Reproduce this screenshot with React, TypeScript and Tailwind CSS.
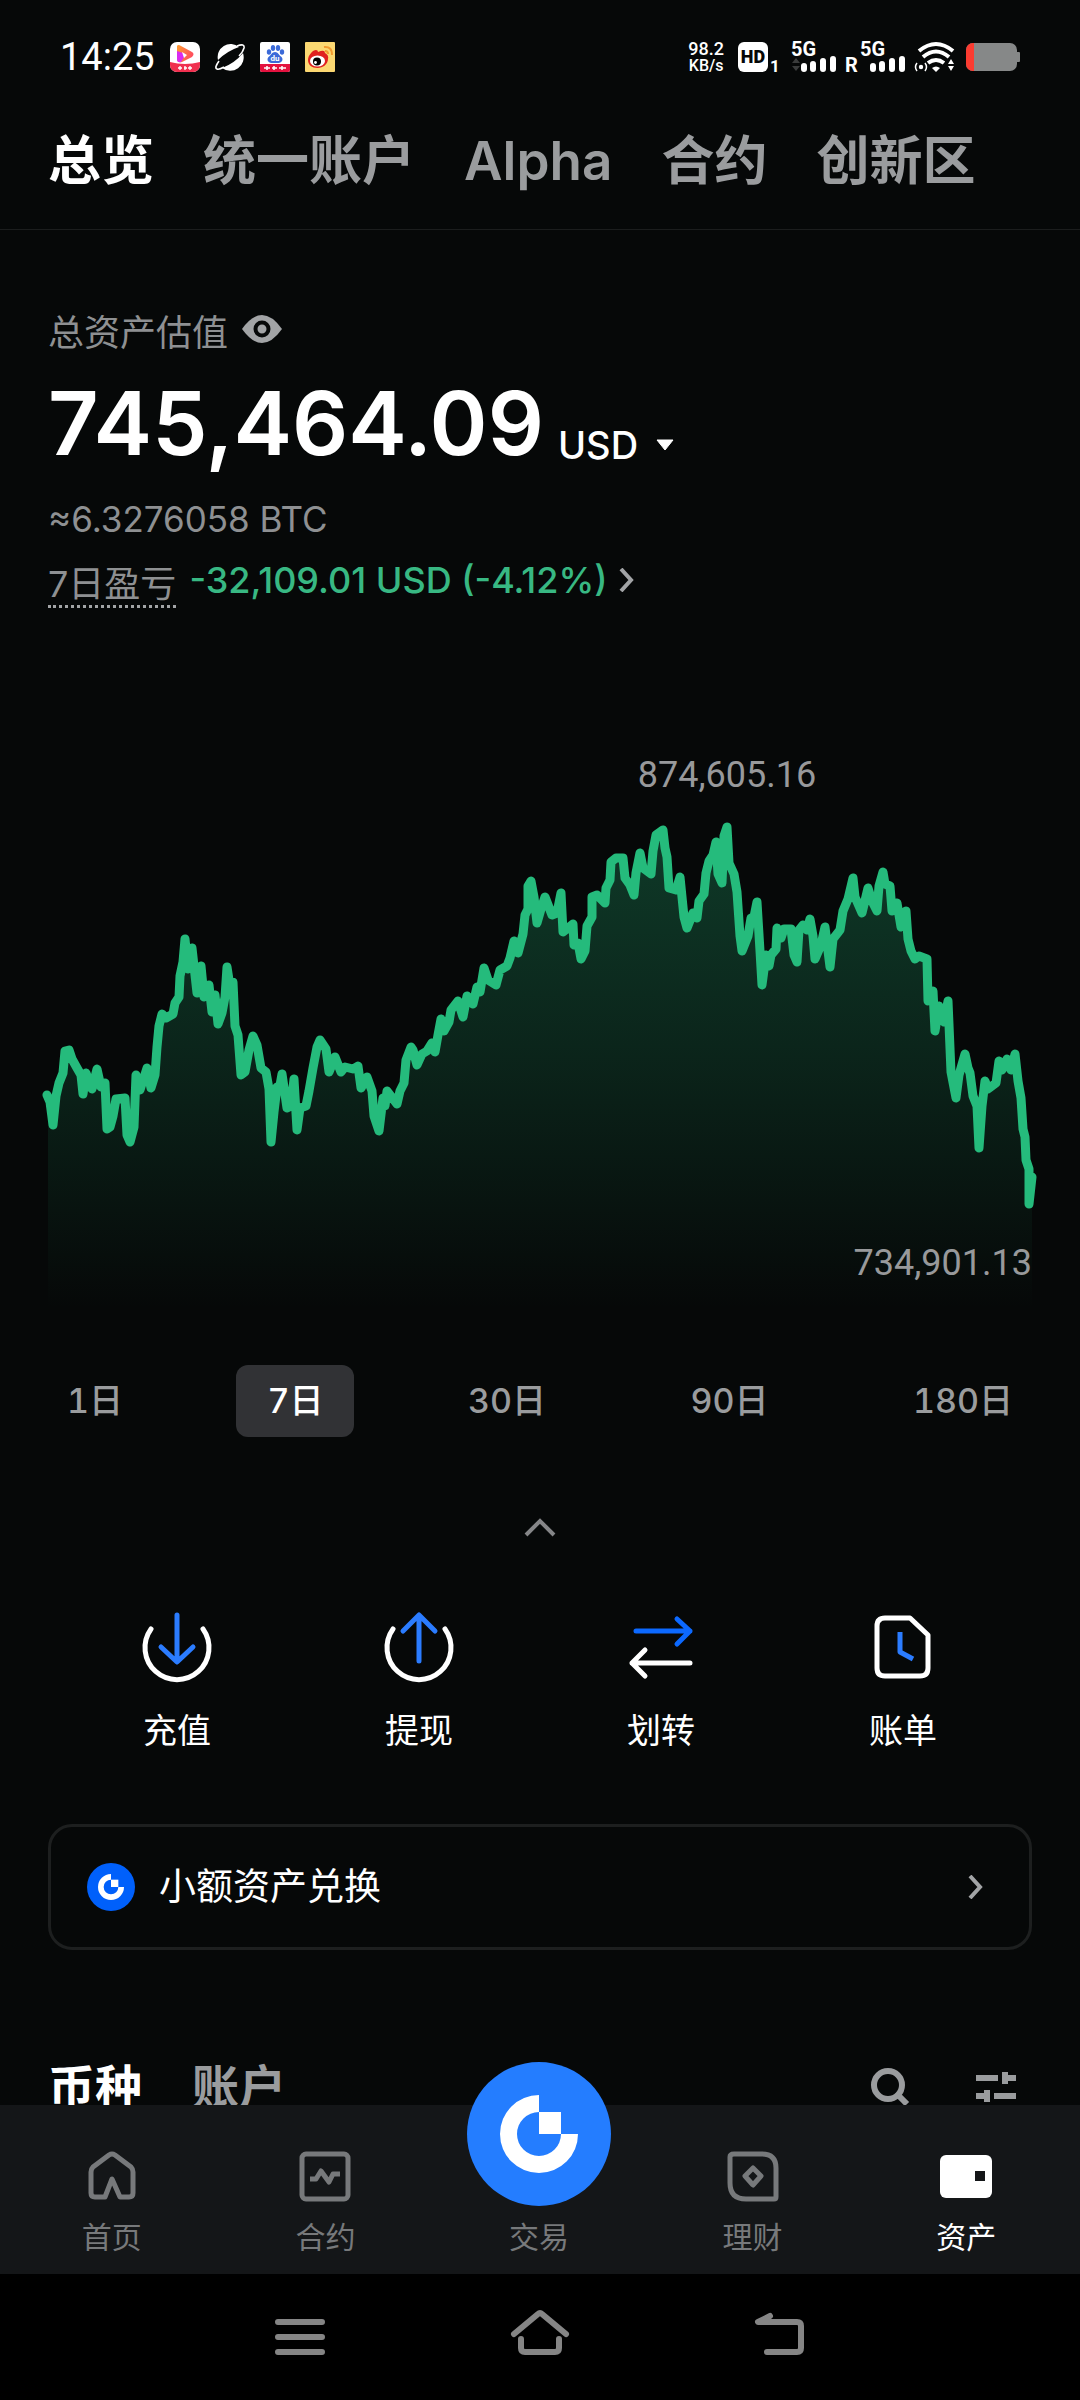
import { useState } from 'react';
import type { ReactNode } from 'react';

const tabs = ['总览', '统一账户', 'Alpha', '合约', '创新区'];
const periods = ['1日', '7日', '30日', '90日', '180日'];

const points: [number, number][] = [
  [47, 366], [50, 373], [53, 396], [56, 367], [59, 354], [63, 344], [65, 322], [69, 321], [72, 330], [77, 339],
  [81, 346], [83, 365], [86, 344], [92, 360], [97, 340], [101, 358], [105, 354], [107, 400], [110, 398], [113, 387],
  [116, 370], [125, 369], [127, 406], [130, 413], [134, 398], [136, 346], [140, 361], [147, 339], [151, 359], [155, 346],
  [157, 318], [159, 297], [162, 285], [166, 289], [173, 285], [175, 274], [179, 268], [180, 247], [183, 233], [185, 210],
  [188, 240], [192, 219], [197, 264], [201, 237], [204, 268], [209, 256], [212, 283], [215, 266], [218, 295], [222, 284],
  [225, 268], [227, 238], [229, 251], [233, 253], [235, 297], [238, 306], [241, 346], [245, 343], [249, 321], [253, 307],
  [257, 316], [261, 339], [266, 343], [269, 360], [271, 413], [274, 383], [277, 358], [279, 362], [282, 345], [287, 379],
  [291, 377], [294, 350], [297, 401], [300, 379], [306, 377], [309, 362], [313, 339], [317, 318], [320, 311], [326, 320],
  [329, 343], [335, 328], [341, 343], [345, 338], [353, 340], [358, 337], [361, 359], [367, 348], [372, 362], [374, 387],
  [379, 402], [383, 369], [385, 377], [387, 362], [397, 375], [400, 362], [404, 354], [406, 331], [411, 318], [413, 321],
  [417, 336], [422, 325], [427, 322], [432, 314], [435, 323], [438, 306], [441, 290], [444, 302], [449, 293], [451, 281],
  [458, 272], [463, 288], [467, 267], [473, 275], [477, 258], [480, 263], [484, 239], [488, 251], [496, 256], [500, 241],
  [507, 237], [510, 229], [514, 212], [518, 224], [523, 205], [525, 186], [528, 180], [528, 157], [531, 152], [534, 168],
  [537, 194], [541, 180], [545, 168], [552, 186], [557, 184], [561, 164], [563, 203], [573, 195], [574, 216], [578, 214],
  [581, 230], [585, 222], [587, 197], [592, 188], [592, 168], [597, 166], [605, 174], [606, 159], [610, 151], [611, 133],
  [616, 129], [623, 129], [625, 149], [630, 156], [634, 166], [636, 144], [640, 124], [643, 139], [651, 145], [653, 122],
  [656, 106], [663, 101], [665, 119], [667, 128], [669, 159], [676, 161], [680, 148], [684, 188], [687, 199], [693, 184],
  [697, 189], [699, 172], [704, 165], [706, 144], [709, 132], [713, 126], [716, 113], [718, 145], [722, 154], [724, 107],
  [727, 98], [729, 134], [734, 145], [737, 163], [740, 207], [742, 222], [748, 207], [751, 189], [754, 188], [757, 173],
  [760, 222], [762, 256], [766, 226], [769, 237], [771, 226], [776, 220], [777, 199], [781, 209], [784, 200], [791, 200],
  [794, 226], [797, 233], [799, 201], [803, 196], [807, 201], [810, 190], [813, 207], [815, 230], [821, 216], [825, 198],
  [830, 238], [833, 210], [840, 201], [843, 182], [848, 170], [853, 149], [855, 168], [862, 184], [868, 159], [872, 172],
  [877, 182], [879, 157], [883, 143], [885, 155], [890, 157], [892, 182], [897, 174], [901, 198], [906, 182], [908, 210],
  [911, 222], [915, 230], [919, 227], [927, 230], [928, 272], [933, 262], [935, 302], [939, 277], [944, 293], [948, 272],
  [951, 343], [956, 369], [959, 346], [965, 325], [968, 339], [970, 344], [973, 367], [977, 377], [979, 419], [982, 377],
  [985, 352], [988, 360], [996, 354], [999, 332], [1002, 341], [1007, 330], [1011, 341], [1015, 325], [1018, 352], [1021, 369],
  [1023, 400], [1025, 408], [1026, 431], [1029, 440], [1029, 475], [1032, 448],
];

const linePath = 'M' + points.map(([x, y]) => `${x} ${y}`).join('L');
const areaPath = `${linePath}V580H48V366Z`;

function Logo({ className, bg }: { className: string; bg: string }) {
  return (
    <svg viewBox="0 0 144 144" className={className}>
      <circle cx="72" cy="72" r="72" fill={bg} />
      <path d="M72 33A39 39 0 1 0 111 72H94A22 22 0 1 1 72 50Z" fill="#fff" />
      <path d="M72 50H94V72H72Z" fill="#fff" />
    </svg>
  );
}

function StatusBar() {
  return (
    <div className="flex h-[114px] items-center justify-between px-[60px] text-white">
      <div className="flex items-center gap-[15px]">
        <span className="font-['Roboto'] text-[38px] leading-[48px]">14:25</span>
        <svg viewBox="0 0 30 30" className="size-[30px]">
          <defs>
            <linearGradient id="play" x1="0" y1="0" x2="1" y2="0.4">
              <stop offset="0" stopColor="#ff9d2e" />
              <stop offset="1" stopColor="#ff4f5e" />
            </linearGradient>
          </defs>
          <rect width="30" height="30" rx="7" fill="#fff" />
          <path d="M0 20Q15 24 30 20V23A7 7 0 0 1 23 30H7A7 7 0 0 1 0 23Z" fill="#f0304f" />
          <path d="M7 4Q8 2 11 4L22 10Q25 12 22 15L12 20Q7 21 7 17Z" fill="url(#play)" />
          <path d="M7 9L16 12L11 20Q7 21 7 17Z" fill="#d92bf0" />
          <path d="M12 10L17 13L14 16Z" fill="#fff" />
          <path d="M8 26H12M14 26H17M18 26H22M10 24V28M15 24V28M20 24V28" stroke="#fff" strokeWidth="1.3" />
        </svg>
        <svg viewBox="0 0 30 30" className="size-[30px]">
          <path d="M3 18A13 13 0 0 1 24 5Q12 9 3 18Z" fill="#fff" />
          <path d="M28 11A13.500 13.500 0 0 1 7 26Q20 21 28 11Z" fill="#fff" />
          <path d="M22 4Q30 1 29 6Q28 10 24 14M4 19Q-1 26 2 27Q4 28 9 25" fill="none" stroke="#fff" strokeWidth="1.6" />
        </svg>
        <svg viewBox="0 0 30 30" className="size-[30px]">
          <rect width="30" height="30" rx="2" fill="#fff" />
          <path d="M0 22H30V28Q30 30 28 30H2Q0 30 0 28Z" fill="#e3123f" />
          <g fill="#3b6ad8">
            <ellipse cx="9" cy="10" rx="2.2" ry="2.8" />
            <ellipse cx="13" cy="6" rx="2.2" ry="3" />
            <ellipse cx="18" cy="6" rx="2.2" ry="3" />
            <ellipse cx="22" cy="10" rx="2.2" ry="2.8" />
            <path d="M15 10C18 10 19 13 21 14.500C24 17 22 21 18.500 21H11.500C8 21 6 17 9 14.500C11 13 12 10 15 10Z" />
          </g>
          <text x="15" y="19" textAnchor="middle" fill="#fff" className="font-['Roboto'] text-[8px] font-bold">du</text>
          <path d="M4 26H10M12 26H17M19 26H26M7 24V28M14 24V28M22 24V28" stroke="#fff" strokeWidth="1.5" />
        </svg>
        <svg viewBox="0 0 30 30" className="size-[30px]">
          <rect width="30" height="30" rx="1" fill="#fbd872" />
          <path d="M3 18C3 13 8 8 11 8Q13 8 13 10Q20 7 20 11Q24 13 23 17C23 22 18 26 12.500 26C7 26 3 23 3 18Z" fill="#e0201f" />
          <ellipse cx="12.500" cy="19" rx="7.500" ry="5.500" fill="#fff" />
          <circle cx="12" cy="19.500" r="4" fill="#000" />
          <circle cx="10.500" cy="20.500" r="1.400" fill="#fff" />
          <path d="M19 5Q27 4 27 13M20 9Q23 9 23 12" fill="none" stroke="#f29a2e" strokeWidth="2" />
        </svg>
      </div>

      <div className="flex items-center font-['Roboto']">
        <div className="mr-[14px] text-center text-[18px] leading-[18px] font-medium">
          <div>98.2</div>
          <div className="text-[16px] leading-[16px]">KB/s</div>
        </div>
        <svg viewBox="0 -8 220 50" className="h-[50px] w-[220px]">
          <rect x="0" y="2" width="30" height="30" rx="6" fill="#fff" />
          <text x="15" y="23" textAnchor="middle" fill="#060808" className="font-['Roboto'] text-[18px] font-black">HD</text>
          <text x="32" y="32" fill="#fff" className="font-['Roboto'] text-[17px] font-bold">1</text>
          <text x="53" y="16" fill="#fff" className="font-['Roboto'] text-[20px] font-bold">5G</text>
          <path d="M58 18L62 23H54ZM58 31L62 26H54Z" fill="#3a3c3c" />
          <path d="M66 26V29M75 24V29M85 21V29M95 19V29" stroke="#fff" strokeWidth="6" strokeLinecap="round" />
          <text x="107" y="32" fill="#fff" className="font-['Roboto'] text-[20px] font-bold">R</text>
          <text x="122" y="16" fill="#fff" className="font-['Roboto'] text-[20px] font-bold">5G</text>
          <path d="M135 26V29M144 24V29M154 21V29M164 19V29" stroke="#fff" strokeWidth="6" strokeLinecap="round" />
          <path d="M181 11Q198 -3 215 11M185 17Q198 6 211 17M190 23Q198 17 206 23" fill="none" stroke="#fff" strokeWidth="4" />
          <path d="M194 28Q198 25 202 28L198 32Z" fill="#fff" />
          <circle cx="183" cy="27" r="2.200" fill="#fff" />
          <path d="M179 23Q176 27 179 31M187 23Q190 27 187 31" fill="none" stroke="#fff" strokeWidth="1.500" />
          <path d="M213 19L216 24H210ZM213 31L216 26H210Z" fill="#fff" />
        </svg>
        <svg viewBox="0 0 54 28" className="ml-2 h-[28px] w-[54px]">
          <rect x="0" y="0" width="51" height="28" rx="7" fill="#868888" />
          <rect x="50" y="9" width="4" height="10" rx="1" fill="#868888" />
          <path d="M8 0V28H7A7 7 0 0 1 0 21V7A7 7 0 0 1 7 0Z" fill="#fb3b30" />
        </svg>
      </div>
    </div>
  );
}

function Chart() {
  return (
    <svg viewBox="0 0 1080 600" className="mt-[121px] block w-full" role="img" aria-label="7日盈亏">
      <defs>
        <linearGradient id="area" gradientUnits="userSpaceOnUse" x1="0" y1="98" x2="0" y2="580">
          <stop offset="0" stopColor="#25bb7c" stopOpacity="0.28" />
          <stop offset="0.5" stopColor="#25bb7c" stopOpacity="0.15" />
          <stop offset="1" stopColor="#25bb7c" stopOpacity="0" />
        </linearGradient>
      </defs>
      <path d={areaPath} fill="url(#area)" />
      <path d={linePath} fill="none" stroke="#25bb7c" strokeWidth="9" strokeLinecap="round" strokeLinejoin="round" />
      <text x="727" y="58" textAnchor="middle" fill="#98999b" className="font-['Roboto'] text-[36px]">874,605.16</text>
      <text x="1032" y="546" textAnchor="end" fill="#98999b" className="font-['Roboto'] text-[36px]">734,901.13</text>
    </svg>
  );
}

function Action({ label, children }: { label: string; children: ReactNode }) {
  return (
    <button className="flex flex-col items-center">
      <svg viewBox="0 0 72 72" className="size-[72px]" fill="none" strokeWidth="5" strokeLinecap="round" strokeLinejoin="round">
        {children}
      </svg>
      <span className="mt-7 text-[34px] leading-[40px]">{label}</span>
    </button>
  );
}

function NavItem({ label, active, children }: { label: string; active?: boolean; children: ReactNode }) {
  return (
    <a href="#" className={active ? 'flex flex-col items-center text-white' : 'flex flex-col items-center text-[#77797b]'}>
      <svg viewBox="0 0 54 54" className="mt-[44px] size-[54px]" fill="none" stroke="currentColor" strokeWidth="5" strokeLinejoin="round">
        {children}
      </svg>
      <span className="mt-4 text-[30px] leading-[36px]">{label}</span>
    </a>
  );
}

export default function App() {
  const [period, setPeriod] = useState('7日');

  return (
    <div className="flex h-screen flex-col bg-[#060808] font-['Inter','Noto_Sans_CJK_SC',sans-serif] text-white">
      <header className="shrink-0 border-b border-[#1b1d1d]">
        <StatusBar />
        <nav className="flex h-[115px] items-start gap-[49px] px-12 text-[53px] leading-[94px] font-semibold whitespace-nowrap">
          {tabs.map((tab, i) => (
            <a key={tab} href="#" className={i === 0 ? 'text-white' : 'text-[#9a9c9e]'}>
              {tab}
            </a>
          ))}
        </nav>
      </header>

      <main className="min-h-0 flex-1 overflow-y-auto [scrollbar-width:none]">
        {/* Balance */}
        <section className="px-12 pt-[79px]">
          <div className="flex h-12 items-center gap-[14px]">
            <span className="text-[36px] leading-[48px] text-[#8e9092]">总资产估值</span>
            <button aria-label="隐藏资产" className="-mt-2">
              <svg viewBox="0 0 40 28" className="h-[28px] w-[40px]">
                <path d="M0 14Q10 0 20 0T40 14Q30 28 20 28T0 14Z" fill="#a2a4a6" />
                <circle cx="20" cy="14" r="6.500" fill="#a2a4a6" stroke="#060808" strokeWidth="4" />
              </svg>
            </button>
          </div>
          <div className="mt-5 flex h-[92px] items-end gap-[14px]">
            <span className="text-[88px] leading-[92px] font-semibold">745,464.09</span>
            <button className="flex items-center gap-[18px] text-[38px] leading-[48px] font-medium">
              USD
              <svg viewBox="0 0 18 12" className="h-[12px] w-[18px]">
                <path d="M1 1H17L9 11Z" fill="#fff" stroke="#fff" strokeLinejoin="round" />
              </svg>
            </button>
          </div>
          <div className="mt-[30px] text-[35px] leading-[40px] text-[#8e9092]">≈6.3276058 BTC</div>
          <div className="mt-6 flex items-start gap-[13px]">
            <span className="border-b-[3px] border-dotted border-[#a2a4a6] text-[36px] leading-[42px] text-[#8e9092]">7日盈亏</span>
            <button className="flex items-center gap-[10px] text-[36px] leading-[34px] font-medium text-[#38b883]">
              -32,109.01 USD (-4.12%)
              <svg viewBox="0 0 16 24" className="h-[24px] w-[16px]" fill="none" stroke="#a2a4a6" strokeWidth="4">
                <path d="M3 1L13 12L3 23" />
              </svg>
            </button>
          </div>
        </section>

        <Chart />

        <div className="mx-9 mt-[36px] flex justify-between text-[34px] leading-[72px] font-medium tabular-nums">
          {periods.map((item) => (
            <button
              key={item}
              onClick={() => setPeriod(item)}
              className={
                item === period
                  ? 'rounded-xl bg-[#313235] px-[31px] text-white'
                  : 'rounded-xl px-[31px] text-[#9a9c9e]'
              }
            >
              {item}
            </button>
          ))}
        </div>

        <button aria-label="收起" className="mx-auto mt-[70px] flex h-10 w-20 items-center justify-center">
          <svg viewBox="0 0 32 20" className="h-[20px] w-[32px]" fill="none" stroke="#858688" strokeWidth="4">
            <path d="M2 18L16 4L30 18" />
          </svg>
        </button>

        {/* Actions */}
        <section className="mt-16 grid grid-cols-4 px-14">
          <Action label="充值">
            <path d="M10 18A32 32 0 1 0 62 18" stroke="#fff" />
            <path d="M36 4V50M20 36L36 51L52 36" stroke="#2b7cff" />
          </Action>
          <Action label="提现">
            <path d="M10 18A32 32 0 1 0 62 18" stroke="#fff" />
            <path d="M36 50V5M20 20L36 4L52 20" stroke="#2b7cff" />
          </Action>
          <Action label="划转">
            <path d="M11 20H65M52 8L65 20L52 33" stroke="#0c69ff" />
            <path d="M65 52H7M20 39L7 52L20 65" stroke="#fff" />
          </Action>
          <Action label="账单">
            <path d="M18 7H43L61 24V57Q61 65 53 65H18Q10 65 10 57V15Q10 7 18 7Z" stroke="#fff" />
            <path d="M33 21V41L46 48" stroke="#2b7cff" strokeLinecap="butt" />
          </Action>
        </section>

        <button className="mx-12 mt-[73px] flex h-[126px] w-[calc(100%-96px)] items-center rounded-3xl border-[3px] border-[#1d1f1f] px-9">
          <Logo className="size-12" bg="#0060fb" />
          <span className="ml-6 text-[37px]">小额资产兑换</span>
          <svg viewBox="0 0 16 24" className="mr-[10px] ml-auto h-[24px] w-[16px]" fill="none" stroke="#a2a4a6" strokeWidth="4">
            <path d="M3 1L13 12L3 23" />
          </svg>
        </button>

        {/* Holdings */}
        <section className="mt-[107px] flex items-center px-12 text-[47px] leading-[60px] font-semibold">
          <button>币种</button>
          <button className="ml-[50px] text-[#9a9c9e]">账户</button>
          <button aria-label="搜索" className="ml-auto">
            <svg viewBox="0 0 40 40" className="size-10" fill="none" stroke="#9a9c9e" strokeWidth="6">
              <circle cx="18" cy="18" r="14" />
              <path d="M28 28L37 37" />
            </svg>
          </button>
          <button aria-label="筛选" className="mr-4 ml-[66px]">
            <svg viewBox="0 0 40 30" className="h-[30px] w-[40px]" fill="#9a9c9e">
              <path d="M0 3H22V9H0ZM26 0H32V3H40V9H32V12H26ZM0 21H8V18H14V30H8V27H0ZM18 21H40V27H18Z" />
            </svg>
          </button>
        </section>
      </main>

      {/* Bottom navigation */}
      <nav className="relative grid h-[169px] shrink-0 grid-cols-5 bg-[#141618] pr-[7px] pl-[5px]">
        <NavItem label="首页">
          <path d="M6 23Q6 20 8 18L24 6Q27 4 30 6L46 18Q48 20 48 23V44Q48 48 44 48H35L27 30L20 48H10Q6 48 6 44Z" />
        </NavItem>
        <NavItem label="合约">
          <rect x="4" y="5" width="46" height="45" rx="4" />
          <path d="M12 30H18L23 22L31 33L35 25H42" strokeLinejoin="round" />
        </NavItem>
        <a href="#" className="flex flex-col items-center text-[#77797b]">
          <Logo className="absolute -top-[43px] size-36" bg="#247dff" />
          <span className="mt-[114px] text-[30px] leading-[36px]">交易</span>
        </a>
        <NavItem label="理财">
          <path d="M8 5H36Q50 5 50 19V48Q50 50 48 50H20Q4 50 4 34V8Q4 5 8 5Z" />
          <path d="M27 19L35 27L27 36L19 27Z" />
        </NavItem>
        <NavItem label="资产" active>
          <rect x="1" y="6" width="52" height="43" rx="6" fill="currentColor" stroke="none" />
          <rect x="36" y="22" width="10" height="10" fill="#141618" stroke="none" />
        </NavItem>
      </nav>

      {/* System keys */}
      <div className="flex h-[126px] shrink-0 items-center justify-center gap-[180px] bg-black">
        {[
          ['菜单', 'M8 15H52M8 30H52M8 45H52'],
          ['主页', 'M4 27L28 7Q30 5 32 7L56 27M11 32V41Q11 45 15 45H45Q49 45 49 41V32'],
          ['返回', 'M20 9L8 15H47Q51 15 51 19V41Q51 45 47 45H17'],
        ].map(([name, d]) => (
          <button key={name} aria-label={name}>
            <svg viewBox="0 0 60 60" className="size-[60px]" fill="none" stroke="#858585" strokeWidth="6" strokeLinecap="round" strokeLinejoin="round">
              <path d={d} />
            </svg>
          </button>
        ))}
      </div>
    </div>
  );
}
